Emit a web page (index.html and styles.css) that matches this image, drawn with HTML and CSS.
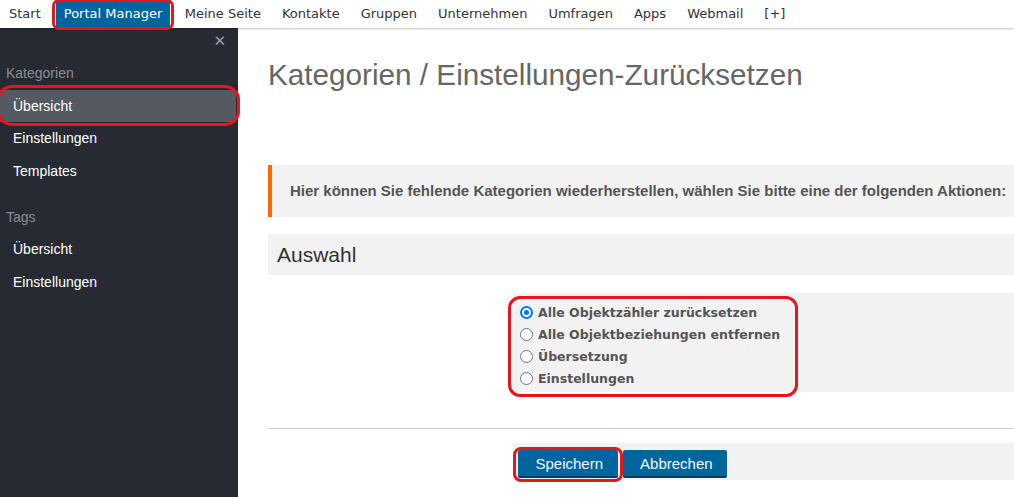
FILE: index.html
```html
<!DOCTYPE html>
<html lang="de">
<head>
<meta charset="utf-8">
<title>Kategorien / Einstellungen-Zurücksetzen</title>
<link rel="stylesheet" href="styles.css">
</head>
<body>
<nav class="topnav">
  <a class="nav-item">Start</a>
  <a class="nav-item active">Portal Manager<span class="mark mark-nav"></span></a>
  <a class="nav-item">Meine Seite</a>
  <a class="nav-item">Kontakte</a>
  <a class="nav-item">Gruppen</a>
  <a class="nav-item">Unternehmen</a>
  <a class="nav-item">Umfragen</a>
  <a class="nav-item">Apps</a>
  <a class="nav-item">Webmail</a>
  <a class="nav-item">[+]</a>
</nav>
<div class="layout">
  <aside class="sidebar">
    <div class="close">&#x2715;</div>
    <div class="side-head">Kategorien</div>
    <a class="side-item active">Übersicht<span class="mark mark-side"></span></a>
    <a class="side-item">Einstellungen</a>
    <a class="side-item">Templates</a>
    <div class="side-head tags">Tags</div>
    <a class="side-item">Übersicht</a>
    <a class="side-item">Einstellungen</a>
  </aside>
  <main class="main">
    <h1 class="title">Kategorien / Einstellungen-Zurücksetzen</h1>
    <div class="info">Hier können Sie fehlende Kategorien wiederherstellen, wählen Sie bitte eine der folgenden Aktionen:</div>
    <div class="panel-head">Auswahl</div>
    <div class="form-row">
      <div class="label-col"></div>
      <div class="field-col radios">
        <label class="radio"><span class="dot checked"></span>Alle Objektzähler zurücksetzen</label>
        <label class="radio"><span class="dot"></span>Alle Objektbeziehungen entfernen</label>
        <label class="radio"><span class="dot"></span>Übersetzung</label>
        <label class="radio"><span class="dot"></span>Einstellungen</label>
        <span class="mark mark-radio"></span>
      </div>
    </div>
    <hr class="sep">
    <div class="form-row">
      <div class="label-col"></div>
      <div class="field-col buttons">
        <button class="btn">Speichern<span class="mark mark-btn"></span></button>
        <button class="btn">Abbrechen</button>
      </div>
    </div>
  </main>
</div>
</body>
</html>
```
FILE: styles.css
```css
* { box-sizing: border-box; }
html, body { margin: 0; padding: 0; height: 100%; }
body {
  font-family: "Liberation Sans", Arial, sans-serif;
  background: #fff;
  overflow: hidden;
}
.topnav {
  height: 28px;
  display: flex;
  align-items: stretch;
  padding-left: 0;
  background: #fff;
  box-shadow: 0 1px 2px rgba(0,0,0,0.25);
  position: relative;
  z-index: 2;
  font-family: "DejaVu Sans", Verdana, sans-serif;
  font-size: 13px;
}
.nav-item {
  display: flex;
  align-items: center;
  padding: 0 10.5px 1px;
  color: #333;
  position: relative;
}
.nav-item:first-child { padding-left: 9px; }
.nav-item.active {
  background: #00659c;
  color: #fff;
  padding: 0 8px 1px;
  margin: 1px 4px 0 4.5px;
  height: 26px;
}
.mark {
  position: absolute;
  border: 3px solid #e8141e;
  pointer-events: none;
}
.mark-nav { left: -4px; right: -4px; top: -2px; bottom: -3px; border-radius: 7px; }
.layout {
  display: flex;
  height: calc(100% - 28px);
}
.sidebar {
  width: 238px;
  flex: none;
  background: #262b33;
  display: flex;
  flex-direction: column;
  padding-top: 4px;
}
.close {
  align-self: flex-end;
  color: #9aa0a8;
  font-size: 15px;
  font-weight: bold;
  margin-right: 12px;
  height: 18px;
  line-height: 18px;
  font-family: "DejaVu Sans", sans-serif;
}
.side-head {
  color: #8a8d92;
  font-size: 14px;
  padding: 15px 6px 0;
  height: 40px;
}
.side-head.tags { padding-top: 20px; height: 45px; }
.side-item {
  display: block;
  color: #fff;
  font-size: 14px;
  padding: 0 13px;
  height: 33px;
  line-height: 30px;
  position: relative;
}
.side-item.active {
  background: #545962;
  width: 236px;
  height: 32px;
  line-height: 32px;
  margin-bottom: 1px;
}
.mark-side { left: -3px; right: -4px; top: -5px; bottom: -4px; border-radius: 16px / 14px; }
.main {
  flex: 1;
  padding-left: 30px;
}
.title {
  margin: 32px 0 0;
  font-weight: normal;
  font-size: 29.7px;
  color: #666;
  height: 105px;
  line-height: 30px;
}
.info {
  background: #f2f2f2;
  border-left: 4px solid #ff6a00;
  height: 52px;
  line-height: 52px;
  padding-left: 18px;
  font-size: 15px;
  font-weight: bold;
  color: #555;
  white-space: nowrap;
}
.panel-head {
  background: #f2f2f2;
  margin-top: 17px;
  height: 41px;
  line-height: 41px;
  padding-left: 9px;
  font-size: 21px;
  color: #333;
}
.form-row { display: flex; }
.label-col { width: 245px; flex: none; }
.field-col { flex: 1; background: #f2f2f2; position: relative; }
.radios {
  margin-top: 18px;
  height: 99px;
  padding: 8px 0 0 7px;
  font-family: "DejaVu Sans", Verdana, sans-serif;
  font-weight: bold;
  font-size: 12.5px;
  color: #555;
}
.radio {
  display: flex;
  align-items: center;
  height: 22px;
}
.dot {
  width: 13px;
  height: 13px;
  border-radius: 50%;
  border: 1px solid #767676;
  background: #fff;
  margin-right: 5px;
  flex: none;
  position: relative;
}
.dot.checked { border: 2px solid #0075ff; }
.dot.checked::after {
  content: "";
  position: absolute;
  left: 2px; top: 2px;
  width: 5px; height: 5px;
  border-radius: 50%;
  background: #0075ff;
}
.mark-radio { left: -5px; top: 3px; width: 290px; height: 101px; border-radius: 12px; }
.sep {
  border: 0;
  border-top: 1px solid #ccc;
  margin: 36px 0 14px;
}
.buttons {
  height: 37px;
  padding: 7px 0 0 5px;
  display: flex;
  gap: 5px;
  align-items: flex-start;
}
.btn {
  position: relative;
  background: #00659c;
  color: #f4f8ff;
  border: 0;
  border-bottom: 2px solid #003f66;
  border-radius: 2px;
  height: 28px;
  padding: 0 14.5px 0 17.5px;
  font-family: "Liberation Sans", Arial, sans-serif;
  font-size: 15px;
}
.mark-btn { left: -5px; right: -5px; top: -3px; bottom: -6px; border-radius: 8px; }
```
